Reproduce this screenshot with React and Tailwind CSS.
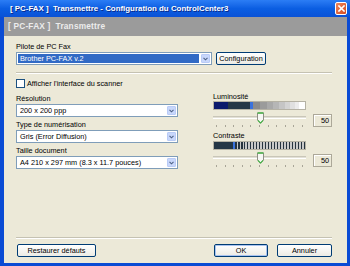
import React from "react";

function Chevron() {
  return (
    <svg width="5" height="4" viewBox="0 0 5 4">
      <path d="M0.5 0.8 L2.5 2.8 L4.5 0.8" fill="none" stroke="#4d6185" strokeWidth="1.1" />
    </svg>
  );
}

function Select({ text, selected, w }) {
  return (
    <div className={`flex h-[13px] border border-[#7f9db9] bg-white ${w}`}>
      <div className="flex flex-1 items-center p-px">
        {selected ? (
          <div className="flex h-full flex-1 items-center bg-[#316ac5] pl-[2px] text-white">{text}</div>
        ) : (
          <div className="pl-[2px] text-black">{text}</div>
        )}
      </div>
      <div className="m-px flex w-[9px] items-center justify-center rounded-[1px] border border-[#b9cbf7] bg-[#c8d7fb]">
        <Chevron />
      </div>
    </div>
  );
}

function XPButton({ children, w, def }) {
  return (
    <div className={`flex h-[13px] items-center justify-center rounded-[2px] border border-[#003c74] bg-gradient-to-b from-white to-[#ecebe4] text-black ${w} ${def ? "shadow-[inset_0_0_0_1px_#a9c3f0]" : ""}`}>
      {children}
    </div>
  );
}

function Thumb() {
  return (
    <svg width="7" height="12" viewBox="0 0 7 12">
      <path d="M0.5 1 H6.5 V8 L3.5 11.3 L0.5 8 Z" fill="#f7f7f4" stroke="#8f8f86" strokeWidth="1" />
      <path d="M0.5 1 H6.5" stroke="#3fb33f" strokeWidth="1.4" />
      <path d="M1 8.3 L3.5 11 L6 8.3" fill="none" stroke="#3fb33f" strokeWidth="1.1" />
    </svg>
  );
}

function Slider() {
  const ticks = Array.from({ length: 11 });
  return (
    <div className="flex items-start">
      <div className="relative h-[15px] w-[93px]">
        <div className="mt-[4px] h-[3px] border-t border-b border-t-[#c9c6b8] border-b-white bg-[#e2e0d6]" />
        <div className="absolute left-[44px] top-0">
          <Thumb />
        </div>
        <div className="mt-[6px] flex justify-between px-[3px]">
          {ticks.map((_, i) => (
            <div key={i} className="h-[2px] w-px bg-[#a8a597]" />
          ))}
        </div>
      </div>
      <div className="ml-[7px] mt-[2px] flex h-[13px] w-[19px] items-center justify-end border border-[#aca899] bg-[#ece9d8] pr-[2px] text-black shadow-[inset_1px_1px_0_#ffffff]">
        50
      </div>
    </div>
  );
}

export default function App() {
  const lum = [
    ["w-[14px]", "bg-[#0b1a6c]"],
    ["w-[22px]", "bg-[#243645]"],
    ["w-[3px]", "bg-[#3a72dc]"],
    ["w-[7px]", "bg-[#8b8b8b]"],
    ["w-[7px]", "bg-[#9b9b9b]"],
    ["w-[6px]", "bg-[#a9a9a9]"],
    ["w-[6px]", "bg-[#b6b6b6]"],
    ["w-[6px]", "bg-[#c5c5c5]"],
    ["w-[5px]", "bg-[#d3d3d3]"],
    ["w-[5px]", "bg-[#e0e0e0]"],
    ["w-[4px]", "bg-[#ececec]"],
    ["flex-1", "bg-white"],
  ];
  return (
    <div className="flex h-[266px] w-[350px] flex-col bg-[#0a4bd4] font-['Liberation_Sans',Arial,sans-serif] text-[7.3px] leading-[9px] text-black">
      {/* title bar */}
      <div className="flex h-[17px] items-center bg-gradient-to-b from-[#2b7df5] via-[#0b5ee2] to-[#0a52d6] pl-[10px] pr-[3px]">
        <div className="flex-1 whitespace-pre text-[7.9px] font-bold text-white [text-shadow:1px_1px_0_#0a2a8a]">
          {"[ PC-FAX ]  Transmettre - Configuration du ControlCenter3"}
        </div>
        <div className="flex h-[13px] w-[12px] items-center justify-center rounded-[2px] border border-white bg-gradient-to-br from-[#f0865a] to-[#d24a20]">
          <svg width="7" height="7" viewBox="0 0 7 7">
            <path d="M1 1 L6 6 M6 1 L1 6" stroke="white" strokeWidth="1.6" strokeLinecap="square" />
          </svg>
        </div>
      </div>
      <div className="flex flex-1 px-[3px] pb-[3px] pl-[4px]">
        <div className="flex flex-1 flex-col">
          {/* gray header band */}
          <div className="flex h-[19px] items-center bg-[#9b9b9b] pl-[4px]">
            <span className="whitespace-pre text-[8.3px] font-bold tracking-[0.2px] text-[#ececec]">{"[ PC-FAX ]  Transmettre"}</span>
          </div>
          {/* body */}
          <div className="flex flex-1 flex-col bg-[#ece9d8] pb-[6px] pl-[12px] pr-[15px] pt-[6px]">
            <div className="h-[9px]">Pilote de PC Fax</div>
            <div className="mt-px flex items-center">
              <Select text="Brother PC-FAX v.2" selected w="w-[196px]" />
              <div className="ml-[4px]">
                <XPButton w="w-[50px]">Configuration</XPButton>
              </div>
            </div>
            <div className="mt-[7px] h-[2px] border-t border-b border-t-[#c5c2b2] border-b-white" />
            <div className="mt-[5px] flex items-center">
              <div className="h-[9px] w-[9px] border border-[#1c5180] bg-white" />
              <span className="ml-[2px]">Afficher l'interface du scanner</span>
            </div>
            <div className="mt-[4px] flex">
              <div className="mt-[2px] flex w-[162px] flex-col">
                <div className="h-[9px]">Résolution</div>
                <div className="mt-px">
                  <Select text="200 x 200 ppp" w="w-[162px]" />
                </div>
                <div className="mt-[3px] h-[9px]">Type de numérisation</div>
                <div className="mt-px">
                  <Select text="Gris (Error Diffusion)" w="w-[162px]" />
                </div>
                <div className="mt-[3px] h-[9px]">Taille document</div>
                <div className="mt-px">
                  <Select text="A4 210 x 297 mm (8.3 x 11.7 pouces)" w="w-[162px]" />
                </div>
              </div>
              <div className="ml-[35px] flex flex-col">
                <div className="h-[9px]">Luminosité</div>
                <div className="flex h-[9px] w-[93px] overflow-hidden border border-[#b5b2a4]">
                  {lum.map(([w, c], i) => (
                    <div key={i} className={`${w} ${c} h-full`} />
                  ))}
                </div>
                <div className="mt-[2px]">
                  <Slider />
                </div>
                <div className="mt-[4px] h-[9px]">Contraste</div>
                <div className="mt-px flex h-[9px] w-[93px] overflow-hidden border border-[#b5b2a4]">
                  <div className="h-full w-[19px] bg-[#243645]" />
                  <div className="h-full w-[2px] bg-[#3a72dc]" />
                  <div className="h-full flex-1 bg-[repeating-linear-gradient(90deg,#26333e_0px,#26333e_1.5px,#c9c9c9_1.5px,#c9c9c9_3px)]" />
                </div>
                <div className="mt-[2px]">
                  <Slider />
                </div>
              </div>
            </div>
            <div className="mt-auto h-[2px] border-t border-b border-t-[#c5c2b2] border-b-white" />
            <div className="mt-[5px] flex items-center">
              <div className="ml-px">
                <XPButton w="w-[79px]">Restaurer défauts</XPButton>
              </div>
              <div className="flex-1" />
              <XPButton w="w-[54px]" def>OK</XPButton>
              <div className="ml-[9px]">
                <XPButton w="w-[55px]">Annuler</XPButton>
              </div>
            </div>
          </div>
        </div>
      </div>
    </div>
  );
}
